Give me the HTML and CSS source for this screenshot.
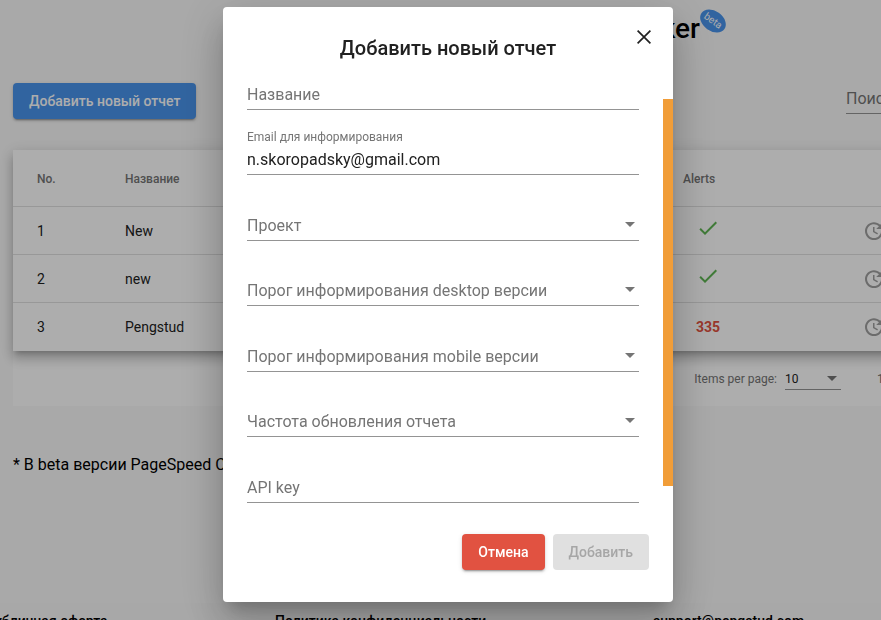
FILE: index.html
```html
<!DOCTYPE html>
<html lang="ru">
<head>
<meta charset="utf-8">
<meta name="viewport" content="width=device-width, initial-scale=1">
<title>PageSpeed Checker</title>
<link rel="stylesheet" href="styles.css">
</head>
<body>
<svg class="symbols">
  <symbol id="check" viewBox="0 0 24 24"><path d="M9 16.2L4.8 12l-1.4 1.4L9 19 21 7l-1.4-1.4L9 16.2z"/></symbol>
  <symbol id="update" viewBox="0 0 24 24"><path d="M21 10.12h-6.78l2.74-2.82c-2.73-2.7-7.15-2.8-9.88-.1-2.73 2.71-2.73 7.08 0 9.79s7.15 2.71 9.88 0C18.32 15.65 19 14.08 19 12.1h2c0 1.98-.88 4.55-2.64 6.29-3.51 3.48-9.21 3.48-12.72 0-3.5-3.47-3.53-9.11-.02-12.58s9.14-3.47 12.65 0L21 3v7.12zM12.5 8v4.25l3.5 2.08-.72 1.21L11 13V8h1.5z"/></symbol>
  <symbol id="arrow" viewBox="0 0 10 5"><path d="M0 0h10L5 5z"/></symbol>
</svg>

<div class="page">
  <header class="header">
    <h1 class="brand">PageSpeed Checker<span class="badge">beta</span></h1>
  </header>
  <main class="main">
    <div class="toolbar">
      <button class="btn btn-primary" type="button">Добавить новый отчет</button>
      <input class="search" type="search" placeholder="Поиск" aria-label="Поиск">
    </div>
    <table class="reports">
      <colgroup><col class="col-no"><col><col class="col-alerts"><col class="col-action"></colgroup>
      <thead>
        <tr><th>No.</th><th>Название</th><th>Alerts</th><th></th></tr>
      </thead>
      <tbody>
        <tr><td>1</td><td>New</td><td><svg class="ok" role="img" aria-label="OK"><use href="#check"/></svg></td><td><svg class="update"><use href="#update"/></svg></td></tr>
        <tr><td>2</td><td>new</td><td><svg class="ok" role="img" aria-label="OK"><use href="#check"/></svg></td><td><svg class="update"><use href="#update"/></svg></td></tr>
        <tr><td>3</td><td>Pengstud</td><td><span class="alert-count">335</span></td><td><svg class="update"><use href="#update"/></svg></td></tr>
      </tbody>
    </table>
    <div class="paginator">
      <label for="page-size">Items per page:</label>
      <div class="page-size">
        <select id="page-size"><option>10</option><option>20</option></select>
        <svg class="arrow"><use href="#arrow"/></svg>
      </div>
      <span class="range">1 – 3 of 3</span>
    </div>
    <p class="note">* В beta версии PageSpeed Checker</p>
  </main>
  <footer class="footer">
    <a href="#offer">Публичная оферта</a>
    <a href="#privacy">Политика конфиденциальности</a>
    <a href="#support">support@pengstud.com</a>
  </footer>
</div>

<div class="overlay">
  <form class="dialog" role="dialog" aria-modal="true" aria-labelledby="dialog-title">
    <button class="close" type="button" aria-label="Закрыть">
      <svg viewBox="0 0 14 14"><path d="M.6.6l12.8 12.8M13.4.6L.6 13.4"/></svg>
    </button>
    <h2 class="dialog-title" id="dialog-title">Добавить новый отчет</h2>
    <div class="dialog-body">
      <div class="fields">
        <div class="field"><input type="text" placeholder="Название" aria-label="Название"></div>
        <div class="field"><label for="email">Email для информирования</label><input id="email" type="email" value="n.skoropadsky@gmail.com"></div>
        <div class="field"><select aria-label="Проект"><option>Проект</option></select><svg class="arrow"><use href="#arrow"/></svg></div>
        <div class="field"><select aria-label="Порог информирования desktop версии"><option>Порог информирования desktop версии</option></select><svg class="arrow"><use href="#arrow"/></svg></div>
        <div class="field"><select aria-label="Порог информирования mobile версии"><option>Порог информирования mobile версии</option></select><svg class="arrow"><use href="#arrow"/></svg></div>
        <div class="field"><select aria-label="Частота обновления отчета"><option>Частота обновления отчета</option></select><svg class="arrow"><use href="#arrow"/></svg></div>
        <div class="field"><input type="text" placeholder="API key" aria-label="API key"></div>
      </div>
      <div class="scrollbar"></div>
    </div>
    <div class="actions">
      <button class="btn btn-danger" type="button">Отмена</button>
      <button class="btn" type="submit" disabled>Добавить</button>
    </div>
  </form>
</div>
</body>
</html>
```
FILE: styles.css
```css
* { box-sizing: border-box; }

body {
  margin: 0;
  min-height: 100vh;
  overflow: hidden;
  background: #fafafa;
  color: #000;
  font-family: Roboto, "Noto Sans", sans-serif;
  font-size: 14px;
}

button, input, select { font-family: inherit; }

.symbols { display: none; }

/* The page is wider than the window and runs off its right edge. */
.page { width: calc(100vw + 56px); height: 100vh; overflow: hidden; }

.header {
  display: flex;
  justify-content: flex-end;
  padding: 13px 237px 0 0;
}
.brand {
  position: relative;
  margin: 0;
  font-size: 28px;
  line-height: 32px;
  font-weight: 500;
}
.badge {
  position: absolute;
  left: 100%;
  top: -2px;
  width: 28px;
  height: 20px;
  margin-left: -1px;
  border-radius: 50%;
  background: #4994ec;
  color: #fff;
  font-size: 10px;
  line-height: 20px;
  font-weight: 400;
  text-align: center;
  transform: rotate(35deg);
}

.main { padding: 38px 16px 0 13px; }
.toolbar {
  display: flex;
  justify-content: space-between;
  align-items: flex-start;
  margin-bottom: 31px;
}

.btn {
  height: 36px;
  padding: 0 16px;
  border: 0;
  border-radius: 4px;
  font-size: 14px;
  font-weight: 500;
  white-space: nowrap;
}
.btn:disabled { background: #e0e0e0; color: #a6a6a6; }
.btn-primary, .btn-danger {
  color: #fff;
  box-shadow: 0 3px 1px -2px rgba(0,0,0,.2), 0 2px 2px rgba(0,0,0,.14), 0 1px 5px rgba(0,0,0,.12);
}
.btn-primary { background: #4994ec; }
.btn-danger { background: #e15241; }

.search {
  width: 75px;
  height: 31px;
  padding: 0;
  border: 0;
  border-bottom: 1px solid #949494;
  border-radius: 0;
  background: none;
  font-size: 16px;
}
::placeholder { color: #757575; opacity: 1; }

.reports {
  position: relative;
  width: 100%;
  table-layout: fixed;
  border-spacing: 0;
  background: #fff;
  box-shadow: 0 5px 5px -3px rgba(0,0,0,.2), 0 8px 10px 1px rgba(0,0,0,.14), 0 3px 14px 2px rgba(0,0,0,.12);
}
.col-no { width: 112px; }
.col-alerts { width: 180px; }
.col-action { width: 58px; }
.reports th, .reports td {
  padding: 0;
  text-align: left;
  border-bottom: 1px solid #e0e0e0;
}
.reports th { height: 57px; padding-top: 2px; color: #757575; font-size: 12px; font-weight: 500; }
.reports td { height: 48px; color: #212121; }
.reports th:first-child, .reports td:first-child { padding-left: 24px; }
.reports tbody tr:last-child td { border-bottom-color: #fff; }
.reports svg { display: block; }
.ok { width: 24px; height: 24px; margin: 0 0 6px 13px; fill: #5fb653; }
.update { width: 24px; height: 24px; margin-left: -1px; fill: #a0a0a0; }
.alert-count { padding-left: 13px; color: #e15241; font-weight: 700; }

.paginator {
  display: flex;
  justify-content: flex-end;
  align-items: center;
  height: 55px;
  background: #fff;
  color: #757575;
  font-size: 12px;
}
.page-size { position: relative; width: 56px; margin: 0 36px 0 8px; }
.range { width: 44px; white-space: nowrap; }

select {
  display: block;
  width: 100%;
  padding: 0;
  border: 0;
  background: none;
  appearance: none;
}
.page-size select {
  height: 22px;
  padding-top: 2px;
  border-bottom: 1px solid #949494;
  border-radius: 0;
  color: #212121;
  font-size: 12px;
}
.arrow {
  position: absolute;
  right: 4px;
  bottom: 13px;
  width: 10px;
  height: 5px;
  fill: #757575;
  pointer-events: none;
}
.page-size .arrow { bottom: 9px; }

.note { margin: 49px 0 0; font-size: 16px; line-height: 20px; }

.footer {
  display: grid;
  grid-template-columns: 290px 378px 1fr;
  margin: 128px 0 0 -15px;
  padding: 8px 0 12px;
  background: #f8f8f8;
  line-height: 20px;
}
.footer a { color: #000; font-weight: 500; text-decoration: none; }

.overlay {
  position: fixed;
  inset: 0;
  display: flex;
  justify-content: center;
  align-items: flex-start;
  padding: 7px 0 0 15px;
  background: rgba(0,0,0,.32);
}
.dialog {
  position: relative;
  width: 450px;
  padding: 25px 0 32px;
  border-radius: 4px;
  background: #fff;
  box-shadow: 0 11px 15px -7px rgba(0,0,0,.2), 0 24px 38px 3px rgba(0,0,0,.14), 0 9px 46px 8px rgba(0,0,0,.12);
}
.dialog-title {
  margin: 0;
  color: #212121;
  font-size: 20px;
  line-height: 32px;
  font-weight: 500;
  text-align: center;
}
.close {
  position: absolute;
  top: 18px;
  right: 17px;
  width: 24px;
  height: 24px;
  padding: 5px;
  border: 0;
  background: none;
}
.close svg { display: block; width: 14px; height: 14px; stroke: #212121; stroke-width: 1.7; }

.dialog-body { display: flex; justify-content: space-between; }
.fields { flex: 1; padding: 0 24px; }
.scrollbar { width: 10px; margin: 35px 0 17px; background: #f19d38; }

.field {
  position: relative;
  display: flex;
  flex-direction: column;
  justify-content: flex-end;
  height: 50px;
  margin-top: 15px;
  padding-bottom: 5px;
  border-bottom: 1px solid #949494;
}
.field:nth-child(odd) { margin-top: 16px; }
.field:first-child { height: 46px; margin-top: 0; }
.field label { color: #757575; font-size: 12px; line-height: 16px; }
.field input, .field select {
  width: 100%;
  height: 20px;
  padding: 0;
  border: 0;
  border-radius: 0;
  background: none;
  color: #212121;
  font-size: 16px;
}
.field label + input { margin-top: 4px; }
.field select { color: #757575; }

.actions {
  display: flex;
  justify-content: flex-end;
  gap: 8px;
  margin-top: 31px;
  padding-right: 24px;
}
```
